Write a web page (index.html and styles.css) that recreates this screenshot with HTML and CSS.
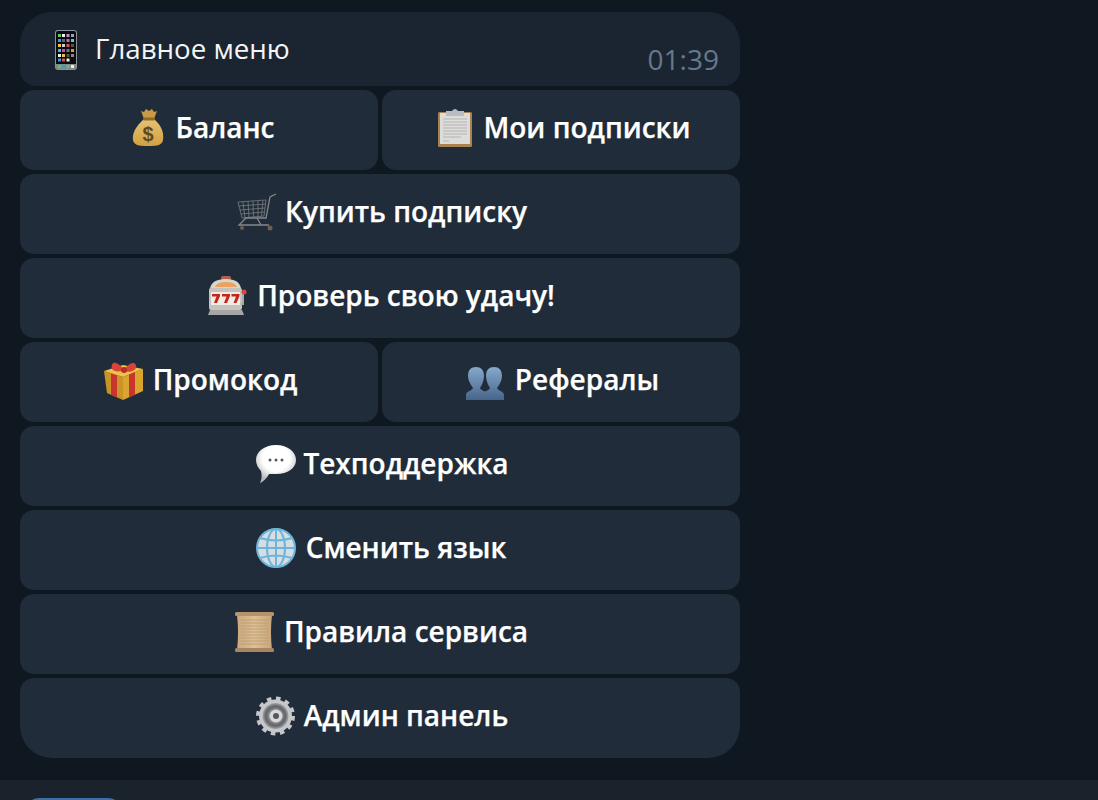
FILE: index.html
```html
<!DOCTYPE html>
<html lang="ru">
    <head>
        <meta charset="UTF-8">
        <meta name="viewport" content="width=device-width, initial-scale=1.0">
        <title>Главное меню</title>
        <link rel="stylesheet" href="styles.css">
    </head>
    <body>
        <svg class="defs" width="0" height="0">
            <defs>
                <linearGradient id="bagFill" x1="0" y1="0" x2="0" y2="1">
                    <stop offset="0" stop-color="#e6c272"/>
                    <stop offset="1" stop-color="#d2a040"/>
                </linearGradient>
                <linearGradient id="peopleFill" x1="0" y1="0" x2="0" y2="1">
                    <stop offset="0" stop-color="#86a9cb"/>
                    <stop offset="1" stop-color="#47658c"/>
                </linearGradient>
                <radialGradient id="bubbleFill" cx="0.5" cy="0.35" r="0.62">
                    <stop offset="0.55" stop-color="#ffffff"/>
                    <stop offset="1" stop-color="#b4b6b9"/>
                </radialGradient>
                <linearGradient id="scrollFill" x1="0" y1="0" x2="1" y2="0">
                    <stop offset="0" stop-color="#c9a87c"/>
                    <stop offset="0.5" stop-color="#dcc097"/>
                    <stop offset="1" stop-color="#c8a67c"/>
                </linearGradient>
                <radialGradient id="gearFill" cx="0.5" cy="0.5" r="0.5">
                    <stop offset="0.3" stop-color="#a9abae"/>
                    <stop offset="0.75" stop-color="#606266"/>
                    <stop offset="1" stop-color="#a4a6a9"/>
                </radialGradient>
            </defs>
        </svg>

        <main class="chat">
            <div class="message">
                <!-- Текст сообщения -->
                <div class="bubble">
                    <div class="bubble-text">
                        <svg class="emoji" viewBox="0 0 44 44">
                            <rect x="12" y="2" width="22" height="40" rx="3" fill="#8d9299"/>
                            <rect x="13" y="3" width="20" height="38" rx="2" fill="#0b0b0d"/>
                            <g>
                                <rect x="15" y="6" width="3" height="3" fill="#5cc46a"/><rect x="19" y="6" width="3" height="3" fill="#eeeeee"/><rect x="23.500" y="6" width="3" height="3" fill="#c58ad0"/><rect x="28" y="6" width="3" height="3" fill="#7fa9c9"/>
                                <rect x="15" y="11" width="3" height="3" fill="#3f9be0"/><rect x="19" y="11" width="3" height="3" fill="#666666"/><rect x="23.500" y="11" width="3" height="3" fill="#9a7fc0"/><rect x="28" y="11" width="3" height="3" fill="#5fc0e0"/>
                                <rect x="15" y="16" width="3" height="3" fill="#e6c84a"/><rect x="19" y="16" width="3" height="3" fill="#cccccc"/><rect x="23.500" y="16" width="3" height="3" fill="#d9534f"/><rect x="28" y="16" width="3" height="3" fill="#555555"/>
                                <rect x="15" y="21" width="3" height="3" fill="#54b8d0"/><rect x="19" y="21" width="3" height="3" fill="#c04fc0"/><rect x="23.500" y="21" width="3" height="3" fill="#777777"/><rect x="28" y="21" width="3" height="3" fill="#e8912c"/>
                                <rect x="15" y="26" width="3" height="3" fill="#f0f0f0"/><rect x="19" y="26" width="3" height="3" fill="#e6c84a"/><rect x="23.500" y="26" width="3" height="3" fill="#555555"/><rect x="28" y="26" width="3" height="3" fill="#888888"/>
                                <rect x="15" y="30.500" width="3" height="3" fill="#3f9be0"/><rect x="19" y="30.500" width="3" height="3" fill="#d9534f"/><rect x="23.500" y="30.500" width="3" height="3" fill="#f0f0f0"/>
                            </g>
                            <rect x="13" y="36" width="20" height="5" fill="#7f8a86"/>
                            <rect x="15" y="37" width="3" height="3" fill="#5cc46a"/><rect x="19" y="37" width="3" height="3" fill="#3f9be0"/><rect x="23.500" y="37" width="3" height="3" fill="#5cc46a"/><rect x="28" y="37" width="3" height="3" fill="#eeeeee"/>
                        </svg>
                        <span class="label">Главное меню</span>
                    </div>
                    <span class="time">01:39</span>
                </div>

                <!-- Кнопки меню -->
                <div class="keyboard">
                    <button class="key">
                        <svg class="emoji" viewBox="0 0 44 44">
                            <g transform="translate(3 0)">
                                <path d="M15 3 L18 4 L20 1 L23 3 L26 1 L28 4 L31 3 L28 11 H18 Z" fill="#c99a45"/>
                                <path d="M18 11 H28 C36 18 38 25 37 32 C36 37 32 38 22 38 C12 38 8 37 7 32 C6 25 10 18 18 11 Z" fill="url(#bagFill)"/>
                                <rect x="17" y="9.500" width="12" height="3" rx="1.500" fill="#8f6a28"/>
                                <text x="22" y="33" text-anchor="middle" class="bag-sign">$</text>
                            </g>
                        </svg>
                        <span class="label">Баланс</span>
                    </button>
                    <button class="key">
                        <svg class="emoji" viewBox="0 0 44 44">
                            <g transform="translate(2 0)">
                                <rect x="5" y="4" width="34" height="35" rx="1.500" fill="#a9824f"/>
                                <rect x="7" y="5" width="30" height="31" fill="#dcdcda"/>
                                <path d="M10 11 H34 M10 14 H34 M10 17 H34 M10 20 H34 M10 23 H34 M10 26 H34 M10 29 H28 M10 33 H16" stroke="#b4b4b2" stroke-width="1"/>
                                <path d="M13 3 H19 Q22 -1 25 3 H31 V8 H13 Z" fill="#b9bcc0"/>
                            </g>
                        </svg>
                        <span class="label">Мои подписки</span>
                    </button>
                    <button class="key key-wide">
                        <svg class="emoji" viewBox="0 0 44 44">
                            <path d="M5 10 L33 8 L31 24 L9 26 Z M10 10 L12 26 M15 9.500 L16 25.500 M20 9 L20.500 25 M25 9 L25 24.500 M30 8.500 L28.500 24 M6 14 L32.500 12 M7 18 L32 16 M8 22 L31.500 20" fill="none" stroke="#7b7e82" stroke-width="0.800"/>
                            <path d="M43 2 L37 5 L33 26 H13 L6 33 H36" fill="none" stroke="#85888c" stroke-width="1.300"/>
                            <path d="M24 26 L28 33" fill="none" stroke="#85888c" stroke-width="1.300"/>
                            <circle cx="9" cy="36" r="2" fill="#6f5d4e"/>
                            <circle cx="37" cy="36" r="2.500" fill="#6f5d4e"/>
                        </svg>
                        <span class="label">Купить подписку</span>
                    </button>
                    <button class="key key-wide">
                        <svg class="emoji" viewBox="0 0 44 44">
                            <rect x="16" y="0" width="10" height="5" rx="2" fill="#b5604a"/>
                            <path d="M5 13 Q6 3 21 3 Q35 3 36 13 Z" fill="#d8d5cd"/>
                            <path d="M10 11 Q12 6 21 6 Q30 6 32 11 Z" fill="#e9a35e"/>
                            <rect x="4" y="12" width="33" height="22" rx="2" fill="#c4c3bd"/>
                            <rect x="6" y="16" width="29" height="13" fill="#efece2"/>
                            <path d="M7 18 H15 V20 L12 27 H9 L11.500 20.500 H7 Z M17 18 H25 V20 L22 27 H19 L21.500 20.500 H17 Z M26.500 18 H34.500 V20 L31.500 27 H28.500 L31 20.500 H26.500 Z" fill="#c3261c"/>
                            <path d="M38 18 V28 H36" fill="none" stroke="#a8a8a6" stroke-width="2"/>
                            <circle cx="39" cy="16" r="2.500" fill="#d8483e"/>
                            <path d="M5 34 H37 L39 39 H3 Z" fill="#a5a6a5"/>
                        </svg>
                        <span class="label">Проверь свою удачу!</span>
                    </button>
                    <button class="key">
                        <svg class="emoji" viewBox="0 0 44 44">
                            <path d="M3 11 L22 17 V40 L6 33 Z" fill="#c99325"/>
                            <path d="M22 17 L42 9 V31 L22 40 Z" fill="#dba42c"/>
                            <path d="M3 11 L22 5 L42 9 L22 17 Z" fill="#eec247"/>
                            <path d="M10 13.500 L16 15.500 V37.500 L10 35 Z M28 14.500 L34 12 V34.500 L28 37.300 Z" fill="#c8352c"/>
                            <path d="M23 10 C16 0 9 1 11 9 C13 12 19 12 23 10 C26 13 33 12 35 8 C36 1 29 1 23 10 Z" fill="#d9443a"/>
                            <circle cx="23" cy="10" r="3" fill="#b62d25"/>
                        </svg>
                        <span class="label">Промокод</span>
                    </button>
                    <button class="key">
                        <svg class="emoji" viewBox="0 0 44 44">
                            <path d="M3 40 V35 C3 31 9 31 10 28 C7 24 5 20 5 16 C5 10 8 7 13 7 C18 7 21 10 21 16 C21 20 19 25 17 28 C18 31 24 31 26 35 V40 Z" fill="url(#peopleFill)"/>
                            <path d="M41 40 V35 C41 31 35 31 34 28 C37 24 39 20 39 16 C39 10 36 7 31 7 C26 7 23 10 23 16 C23 20 25 25 27 28 C26 31 20 31 18 35 V40 Z" fill="url(#peopleFill)"/>
                        </svg>
                        <span class="label">Рефералы</span>
                    </button>
                    <button class="key key-wide">
                        <svg class="emoji" viewBox="0 0 44 44">
                            <g transform="translate(2 0)">
                                <path d="M23 1 C35 1 43 8 43 16 C43 24 35 30 23 30 C20 30 18 30 16 30 C14 34 10 38 7 39 C9 35 9 31 8 27 C5 24 3 20 3 16 C3 8 11 1 23 1 Z" fill="url(#bubbleFill)"/>
                                <circle cx="17" cy="16" r="1.500" fill="#55585c"/>
                                <circle cx="23" cy="16" r="1.500" fill="#55585c"/>
                                <circle cx="29" cy="16" r="1.500" fill="#55585c"/>
                            </g>
                        </svg>
                        <span class="label">Техподдержка</span>
                    </button>
                    <button class="key key-wide">
                        <svg class="emoji" viewBox="0 0 44 44">
                            <g transform="translate(-1 0)">
                                <circle cx="23" cy="20" r="19" fill="#d6dde3"/>
                                <g fill="none" stroke="#6cb4da" stroke-width="2">
                                    <circle cx="23" cy="20" r="19"/>
                                    <ellipse cx="23" cy="20" rx="9" ry="19"/>
                                    <path d="M23 1 V39 M4 20 H42 M7 10 Q23 15 39 10 M7 30 Q23 25 39 30"/>
                                </g>
                            </g>
                        </svg>
                        <span class="label">Сменить язык</span>
                    </button>
                    <button class="key key-wide">
                        <svg class="emoji" viewBox="0 0 44 44">
                            <g transform="translate(-1 0)">
                                <path d="M6 3 H41 Q39 20 41 38 H6 Q8 20 6 3 Z" fill="url(#scrollFill)"/>
                                <path d="M10 8 H38 M10 11 H37 M10 14 H37 M10 17 H38 M10 20 H38 M10 23 H37 M10 26 H38 M10 29 H38 M10 32 H37" stroke="#bd9b70" stroke-width="0.800"/>
                                <rect x="4" y="0" width="39" height="4" rx="1.500" fill="#b8926a"/>
                                <rect x="4" y="36" width="39" height="4" rx="1.500" fill="#a88560"/>
                            </g>
                        </svg>
                        <span class="label">Правила сервиса</span>
                    </button>
                    <button class="key key-wide key-last">
                        <svg class="emoji" viewBox="0 0 44 44">
                            <circle cx="23.500" cy="20" r="16.500" fill="#c5c7ca"/>
                            <circle cx="23.500" cy="20" r="17.500" fill="none" stroke="#c5c7ca" stroke-width="4" stroke-dasharray="4.500 4.663"/>
                            <circle cx="23.500" cy="20" r="13" fill="url(#gearFill)"/>
                            <circle cx="24" cy="20" r="6.500" fill="#d7d9db"/>
                            <circle cx="24" cy="20" r="3" fill="#55575b"/>
                        </svg>
                        <span class="label">Админ панель</span>
                    </button>
                </div>
            </div>
        </main>

        <footer class="composer">
            <div class="menu-btn"></div>
        </footer>
    </body>
</html>
```

FILE: styles.css
```css
body {
    font-family: "Open Sans", "Noto Sans", sans-serif;
    background-color: #0f1720;
    margin: 0;
    padding: 0;
    height: 800px;
    overflow: hidden;
    display: flex;
    flex-direction: column;
}

.defs {
    position: absolute;
}

.chat {
    height: 780px;
    box-sizing: border-box;
    padding: 12px 0 0 20px;
}

.message {
    width: 720px;
    display: flex;
    flex-direction: column;
    gap: 4px;
}

.bubble {
    height: 74px;
    box-sizing: border-box;
    padding: 16px 21px 0 23px;
    background-color: #1b2531;
    border-radius: 32px 32px 16px 16px;
    display: flex;
    justify-content: space-between;
}

.bubble-text {
    display: flex;
    align-items: center;
    gap: 8px;
    height: 44px;
    color: #f5f5f5;
    font-size: 27.7px;
}

.label {
    line-height: 38px;
    padding-bottom: 6px;
}

.bubble-text .label {
    padding-bottom: 4px;
}

.time {
    align-self: flex-end;
    margin-bottom: 10px;
    color: #66788a;
    font-size: 28px;
    line-height: 34px;
}

.keyboard {
    display: grid;
    grid-template-columns: 1fr 1fr;
    grid-auto-rows: 80px;
    gap: 4px;
}

.key {
    display: flex;
    align-items: center;
    justify-content: center;
    gap: 8px;
    padding: 0;
    border: none;
    border-radius: 14px;
    background-color: #202c39;
    color: #fff;
    font-family: inherit;
    font-size: 28px;
    font-weight: 600;
    -webkit-text-stroke: 0.25px #fff;
}

.key-wide {
    grid-column: 1 / -1;
}

.key-last {
    border-radius: 14px 14px 32px 32px;
}

.emoji {
    width: 44px;
    height: 44px;
    flex-shrink: 0;
    overflow: visible;
}

.bag-sign {
    font-family: "Liberation Sans", sans-serif;
    font-size: 20px;
    fill: #5b4a24;
    stroke: none;
}

.composer {
    flex: 1;
    overflow: hidden;
    background-color: #1a222c;
    padding: 18px 0 0 25px;
}

.menu-btn {
    width: 97px;
    height: 40px;
    border-radius: 14px;
    background-color: #3f6fa8;
}
```
